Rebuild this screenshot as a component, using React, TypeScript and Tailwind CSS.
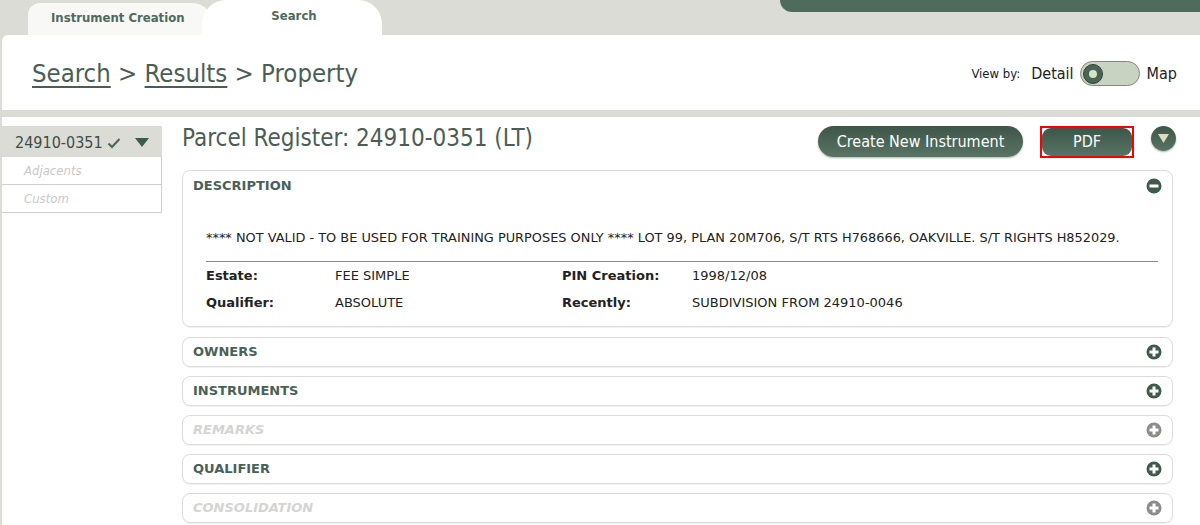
import React from "react";

const font = { fontFamily: '"DejaVu Sans Condensed", "DejaVu Sans", sans-serif' };
const wide = { fontFamily: '"DejaVu Sans", sans-serif' };

function PlusIcon({ disabled }: { disabled?: boolean }) {
  return (
    <svg width="16" height="16" viewBox="0 0 16 16">
      <circle cx="8" cy="8" r="7.5" fill={disabled ? "#8a8d8a" : "#3e5a4b"} />
      <rect x="6.5" y="3.5" width="3" height="9" fill="#fff" />
      <rect x="3.5" y="6.5" width="9" height="3" fill="#fff" />
    </svg>
  );
}

function MinusIcon() {
  return (
    <svg width="16" height="16" viewBox="0 0 16 16">
      <circle cx="8" cy="8" r="7.5" fill="#3e5a4b" />
      <rect x="3.5" y="6.5" width="9" height="3" fill="#fff" />
    </svg>
  );
}

function Section({ title, disabled }: { title: string; disabled?: boolean }) {
  return (
    <div className="h-[30px] border border-[#dcdcdc] rounded-[8px] flex items-center justify-between pl-[10px] pr-[10px] shadow-[0_1px_1px_rgba(0,0,0,0.06)]">
      <span
        style={wide}
        className={
          disabled
            ? "text-[13px] font-bold italic text-[#d4d4d2]"
            : "text-[13px] font-bold text-[#4a6158]"
        }
      >
        {title}
      </span>
      <PlusIcon disabled={disabled} />
    </div>
  );
}

export default function App() {
  return (
    <div className="w-[1200px] h-[525px] bg-[#dcdcd6] overflow-hidden text-[#222]" style={font}>
      {/* tabs */}
      <div className="h-[35px] flex items-end relative">
        <div className="ml-[28px] h-[32px] w-[186px] bg-[#f8f8f6] rounded-tl-[12px] rounded-tr-[22px] flex items-center pl-[23px] pb-[3px]">
          <span className="text-[13px] font-bold text-[#4f6a5c]">Instrument Creation</span>
        </div>
        <div className="-ml-[12px] h-[35px] w-[180px] bg-white rounded-t-[24px] flex justify-center pt-[6px] pl-[4px]">
          <span className="text-[13px] font-bold text-[#4f6a5c]">Search</span>
        </div>
        <div className="ml-auto self-start h-[12px] w-[420px] bg-[#4f6b5b] rounded-bl-[34px]" />
      </div>

      {/* breadcrumb bar */}
      <div className="ml-[2px] h-[75px] bg-white rounded-tl-[6px] flex items-center justify-between pl-[30px] pr-[23px] pt-[2px]">
        <div className="text-[25.5px] text-[#4b5e56]">
          <span className="underline underline-offset-[4px]">Search</span>
          <span> &gt; </span>
          <span className="underline underline-offset-[4px]">Results</span>
          <span> &gt; Property</span>
        </div>
        <div className="flex items-center">
          <span className="text-[13px] text-[#1a1a2a] mr-[11px]">View by:</span>
          <span className="text-[16px] text-[#222] mr-[6px]">Detail</span>
          <div className="w-[60px] h-[25px] rounded-full bg-[#c9d3c1] border border-[#85887f] flex items-center pl-[2px] mr-[7px]">
            <div className="w-[20px] h-[20px] rounded-full bg-[#4a6556] border border-[#2f4238] flex items-center justify-center">
              <div className="w-[8px] h-[8px] rounded-full bg-[#d4e6c4]" />
            </div>
          </div>
          <span className="text-[16px] text-[#222]">Map</span>
        </div>
      </div>

      <div className="h-[7px]" />

      {/* body */}
      <div className="ml-[2px] h-[408px] bg-white flex pt-[9px]">
        {/* sidebar */}
        <div className="w-[160px] shrink-0">
          <div className="h-[31px] bg-[#dcdcd6] flex items-center pl-[13px] pr-[13px] pt-[2px] justify-between">
            <span className="text-[16px] text-[#3d4d46] flex items-center">
              24910-0351
              <svg width="14" height="12" viewBox="0 0 14 12" className="ml-[4px]">
                <path d="M1.5 6.5 L5 10 L12.5 2" stroke="#4a6556" strokeWidth="2" fill="none" />
              </svg>
            </span>
            <svg width="14" height="10" viewBox="0 0 14 10">
              <path d="M0 0 H14 L7 9 Z" fill="#3e5a4b" />
            </svg>
          </div>
          <div className="h-[28px] border-b border-r border-[#cfcfcf] flex items-center pl-[22px] pt-[1px] text-[13px] italic text-[#c8c8c8]">
            Adjacents
          </div>
          <div className="h-[28px] border-b border-r border-[#cfcfcf] flex items-center pl-[22px] pt-[1px] text-[13px] italic text-[#c8c8c8]">
            Custom
          </div>
        </div>

        {/* main */}
        <div className="ml-[20px] w-[991px]">
          <div className="flex items-start h-[44px]">
            <h1 className="text-[24px] text-[#4b5e56] leading-[22px] mt-[1px]">Parcel Register: 24910-0351 (LT)</h1>
            <div className="ml-auto -mr-[3px] flex items-start">
              <button className="h-[31px] w-[205px] rounded-full bg-gradient-to-b from-[#3e5649] to-[#587464] text-white text-[16px] shadow-[0_1px_2px_rgba(0,0,0,0.3)]">
                Create New Instrument
              </button>
              <div className="ml-[17px] border-2 border-[#ff0000] w-[94px] h-[32px] flex items-center justify-center">
                <button className="h-[28px] w-[90px] rounded-[9px] bg-gradient-to-b from-[#3e5649] to-[#587464] text-white text-[16px]">
                  PDF
                </button>
              </div>
              <div className="ml-[17px] w-[25px] h-[25px] rounded-full bg-gradient-to-b from-[#3e5649] to-[#587464] flex items-center justify-center shadow-[0_1px_2px_rgba(0,0,0,0.3)]">
                <svg width="11" height="9" viewBox="0 0 11 9">
                  <path d="M0 0 H11 L5.5 9 Z" fill="#d9dcbf" />
                </svg>
              </div>
            </div>
          </div>

          {/* description */}
          <div className="border border-[#dcdcdc] rounded-[8px] shadow-[0_1px_1px_rgba(0,0,0,0.06)]" style={wide}>
            <div className="h-[30px] flex items-center justify-between pl-[10px] pr-[10px]">
              <span className="text-[13px] font-bold text-[#4a6158]">DESCRIPTION</span>
              <MinusIcon />
            </div>
            <div className="pl-[23px] pr-[14px] pt-[28px] pb-[10px]">
              <div className="text-[12.9px] leading-[18px] text-[#222]">
                **** NOT VALID - TO BE USED FOR TRAINING PURPOSES ONLY **** LOT 99, PLAN 20M706, S/T RTS H768666, OAKVILLE. S/T RIGHTS H852029.
              </div>
              <div className="mt-[14px] border-t border-[#8a8a8a]" />
              <div className="grid grid-cols-[129px_227px_130px_1fr] text-[13px] text-[#222]">
                <div className="h-[27px] flex items-center font-bold">Estate:</div>
                <div className="h-[27px] flex items-center">FEE SIMPLE</div>
                <div className="h-[27px] flex items-center font-bold">PIN Creation:</div>
                <div className="h-[27px] flex items-center">1998/12/08</div>
                <div className="h-[27px] flex items-center font-bold">Qualifier:</div>
                <div className="h-[27px] flex items-center">ABSOLUTE</div>
                <div className="h-[27px] flex items-center font-bold">Recently:</div>
                <div className="h-[27px] flex items-center">SUBDIVISION FROM 24910-0046</div>
              </div>
            </div>
          </div>

          <div className="mt-[10px] flex flex-col gap-[9px]">
            <Section title="OWNERS" />
            <Section title="INSTRUMENTS" />
            <Section title="REMARKS" disabled />
            <Section title="QUALIFIER" />
            <Section title="CONSOLIDATION" disabled />
          </div>
        </div>
      </div>
    </div>
  );
}
